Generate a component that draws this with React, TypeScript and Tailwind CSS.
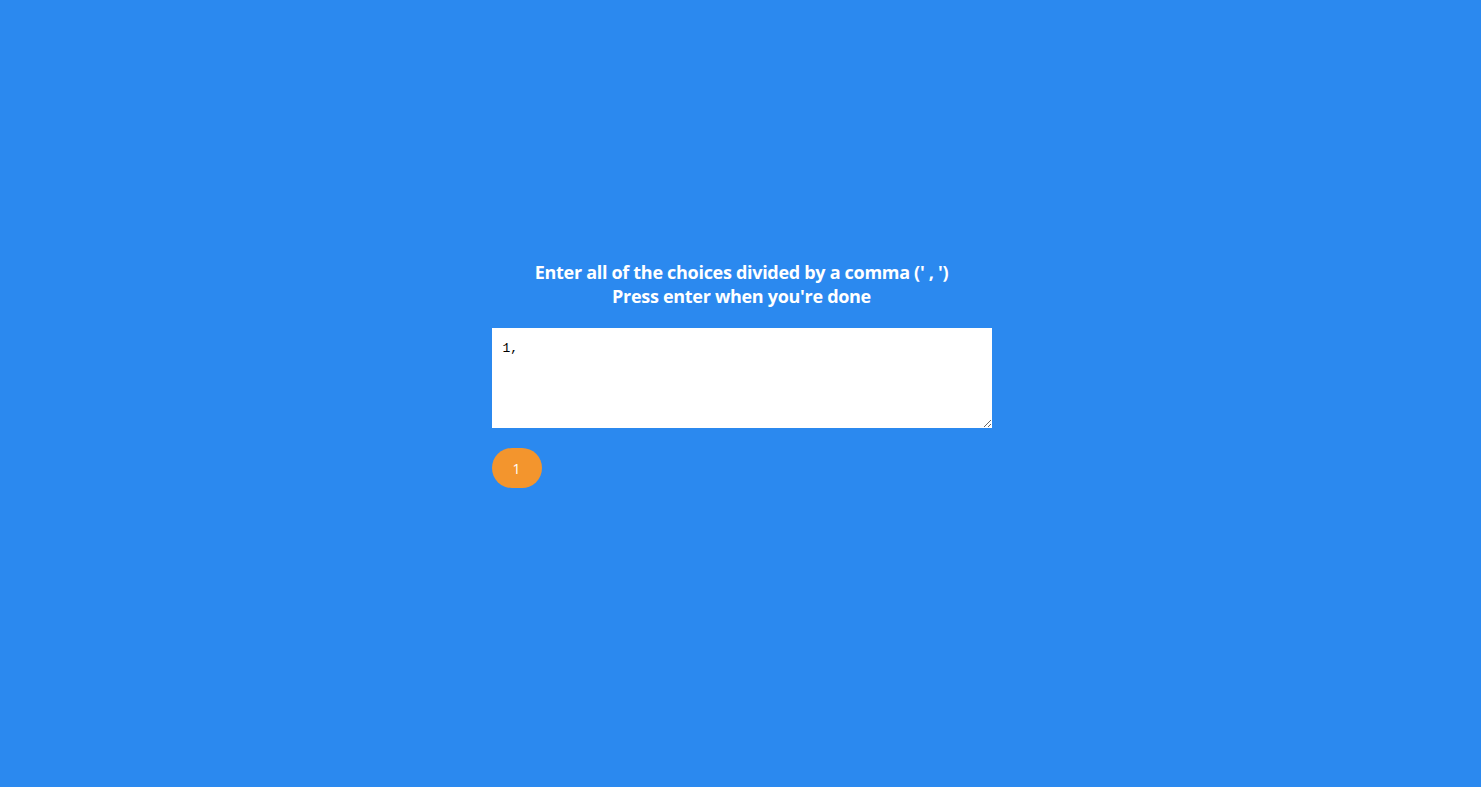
export default function App() {
  return (
    <div className="min-h-[787px] w-full bg-[#2b89ef] flex flex-col items-center pt-[260px] pl-[2px] font-['Open_Sans','Liberation_Sans',sans-serif]">
      <h2 className="text-white font-bold text-[18px] leading-[24px] text-center tracking-[-0.3px]">
        Enter all of the choices divided by a comma (' , ')
        <br />
        Press enter when you're done
      </h2>
      <div className="mt-[20px] w-[500px]">
        <textarea
          defaultValue="1,"
          className="block w-[500px] h-[100px] bg-white text-[13px] text-black pt-[11px] px-[11px] font-['Liberation_Mono',monospace] outline-none resize"
        />
        <button className="mt-[20px] w-[50px] h-[40px] rounded-full bg-[#f3952d] text-white text-[14px]">
          1
        </button>
      </div>
    </div>
  );
}
